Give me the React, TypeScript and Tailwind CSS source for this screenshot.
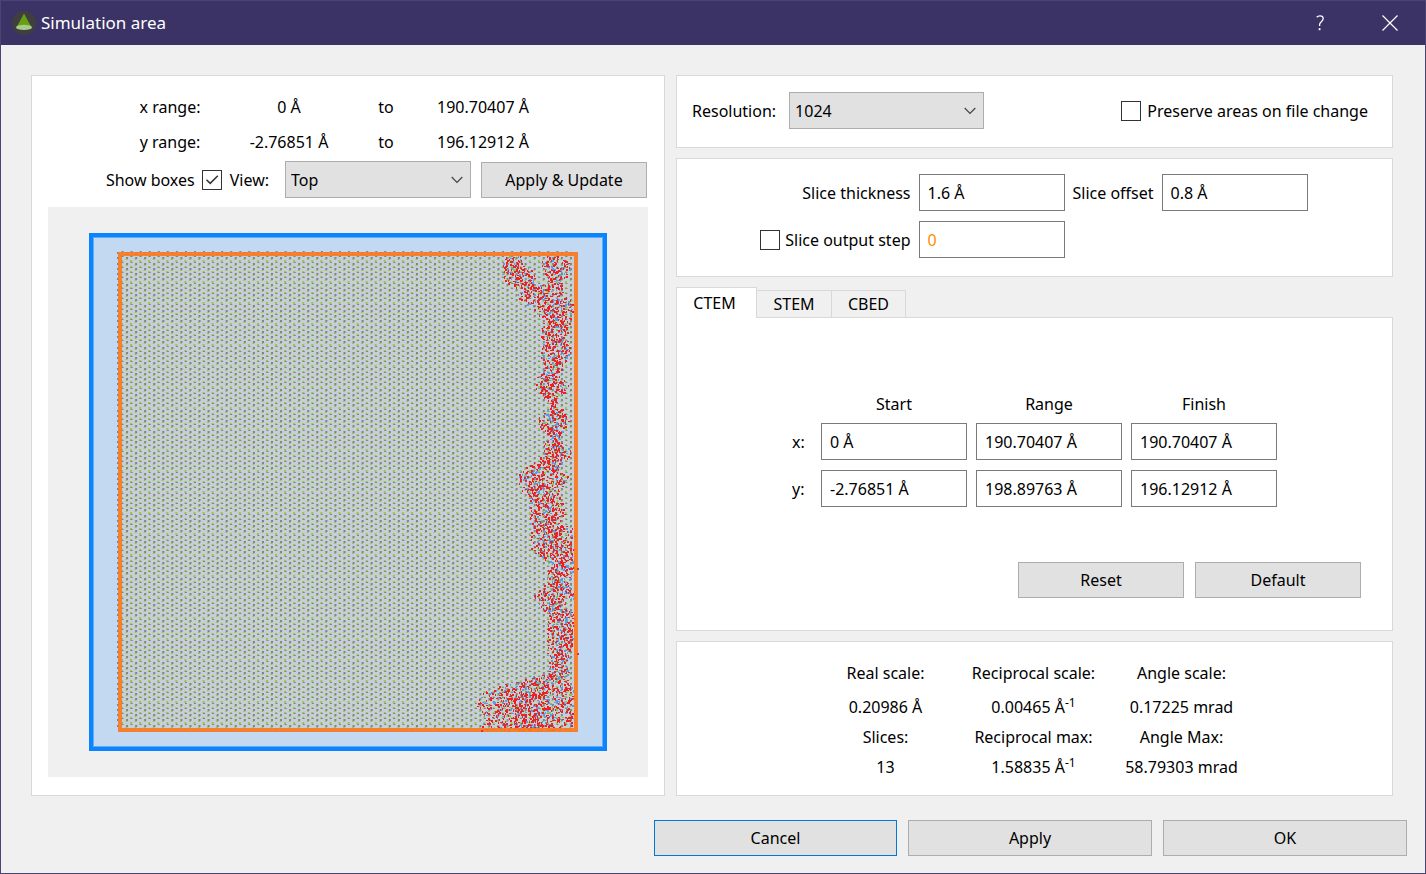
import React, { useId, useState } from "react";

const BUTTON =
  "h-9 border border-[#adadad] bg-[#e1e1e1] text-center hover:border-[#0078d7] focus:outline-none";
const FIELD =
  "h-[37px] w-full min-w-0 border border-[#7a7a7a] bg-white px-2 focus:border-[#0078d7] focus:outline-none";
const PANEL = "border border-[#d9d9d9] bg-white";

/* Horizontal extents of the amorphous region: [y, left, right] */
const CLUSTER: [number, number, number][] = [
  [49, 459, 472], [55, 455, 474], [61, 453, 482], [68, 454, 486], [75, 456, 488],
  [81, 467, 514], [87, 469, 514], [93, 471, 524], [99, 480, 526], [105, 487, 524],
  [113, 493, 522], [121, 492, 522], [129, 491, 517], [137, 494, 520], [145, 492, 524],
  [153, 493, 518], [161, 497, 514], [169, 489, 512], [177, 486, 520], [185, 488, 517],
  [191, 498, 508], [197, 501, 508], [203, 496, 515], [211, 490, 522], [219, 491, 520],
  [227, 498, 512], [235, 498, 512], [243, 492, 524], [251, 491, 521], [257, 482, 514],
  [263, 474, 513], [269, 469, 520], [277, 471, 516], [283, 472, 512], [289, 482, 512],
  [297, 480, 515], [305, 483, 518], [313, 481, 514], [321, 482, 526], [329, 483, 527],
  [337, 481, 526], [345, 483, 526], [353, 497, 528], [361, 499, 526], [369, 498, 524],
  [376, 498, 525], [383, 489, 524], [389, 485, 528], [399, 489, 514], [405, 499, 525],
  [413, 500, 526], [433, 498, 524], [448, 499, 522], [458, 501, 517], [465, 500, 524],
  [471, 477, 516], [477, 454, 524], [483, 436, 526], [493, 430, 526], [501, 428, 528],
  [509, 436, 527], [517, 434, 528], [524, 432, 526],
];
const BRANCH: [number, number, number][] = [
  [49, 498, 511], [55, 492, 520], [61, 494, 522], [68, 497, 519], [75, 499, 517], [81, 500, 514],
];

function makeRandom(seed: number) {
  let s = seed;
  return () => {
    s = (s * 1664525 + 1013904223) % 4294967296;
    return s / 4294967296;
  };
}

/* Rows of atoms zigzagging by a pixel, repeated down the cell */
function latticePath(startX: number, startY: number) {
  let d = "";
  for (let row = 0; row < 91; row++) {
    const y = Math.round(startY + row * 5.25);
    for (let col = 0; startX + col * 4.53 < 526; col++) {
      const x = startX + col * 4.53;
      const zig = col % 2;
      d += zig
        ? `M${x.toFixed(2)} ${y - 1}h2v1h-2z`
        : `M${x.toFixed(2)} ${y}h2v2h-2z`;
    }
  }
  return d;
}

function clusterPaths() {
  const rand = makeRandom(41);
  const out = { red: "", blue: "", green: "" };
  for (const spans of [CLUSTER, BRANCH]) {
    for (let i = 0; i < spans.length - 1; i++) {
      const [y0, l0, r0] = spans[i];
      const [y1, l1, r1] = spans[i + 1];
      for (let y = y0; y < y1; y++) {
        const t = (y - y0) / (y1 - y0);
        const left = l0 + (l1 - l0) * t;
        const width = r0 + (r1 - r0) * t - left;
        const count = width / 5;
        for (let n = 0; n < count; n++) {
          const u = rand() < 0.7 ? rand() : (rand() + rand()) / 2;
          const x = Math.round(left + width * u);
          const w = rand() < 0.6 ? 2 : 1;
          const h = w === 1 || rand() < 0.5 ? 2 : 1;
          const pick = rand();
          const key = pick < 0.68 ? "red" : pick < 0.93 ? "blue" : "green";
          out[key] += `M${x} ${y}h${w}v${h}h${-w}z`;
        }
      }
    }
  }
  return out;
}

const GREY_ATOMS = latticePath(69, 45);
const GREEN_ATOMS = latticePath(73, 48);
const ATOMS = clusterPaths();

function StructureView() {
  return (
    <svg
      viewBox="0 0 600 570"
      className="mt-[9px] block h-auto w-full bg-[#f0f0f0]"
      role="img"
      aria-label="Structure preview"
    >
      <rect x="41" y="26" width="518" height="518" fill="#0a84ff" />
      <rect x="45" y="30" width="510" height="510" fill="#62adf8" />
      <rect x="46" y="31" width="508" height="508" fill="#c3d9f1" />
      <rect x="70" y="45" width="460" height="480" fill="#c8ced8" />
      <path d={GREEN_ATOMS} fill="#8bcf45" />
      <path d={GREY_ATOMS} fill="#87818c" />
      <g shapeRendering="crispEdges">
        <path d={ATOMS.green} fill="#86c552" />
        <path d={ATOMS.blue} fill="#5b9ce6" />
        <path d={ATOMS.red} fill="#ee2024" />
      </g>
      <rect x="72" y="47" width="456" height="476" fill="none" stroke="#f87a22" strokeOpacity="0.93" strokeWidth="4" />
      <path d="M529 361h2v2h-2zM529 446h2v2h-2zM433 523h2v2h-2z" fill="#e03030" />
    </svg>
  );
}

function CheckBox({ id, initial = false }: { id: string; initial?: boolean }) {
  const [on, setOn] = useState(initial);
  return (
    <span className="relative inline-flex size-5 shrink-0">
      <input
        id={id}
        type="checkbox"
        checked={on}
        onChange={(e) => setOn(e.target.checked)}
        className="size-5 appearance-none border border-[#333] bg-white"
      />
      {on && (
        <svg viewBox="0 0 20 20" className="pointer-events-none absolute inset-0 size-5" fill="none" stroke="#333" strokeWidth="1.5">
          <path d="M4.5 9.8 8.2 13.4 15.8 5.8" />
        </svg>
      )}
    </span>
  );
}

function Select({ id, options, className }: { id: string; options: string[]; className: string }) {
  return (
    <span className={`relative inline-flex ${className}`}>
      <select id={id} className="h-[37px] w-full appearance-none border border-[#adadad] bg-[#e1e1e1] pr-8 pl-[5px] focus:outline-none">
        {options.map((o) => (
          <option key={o}>{o}</option>
        ))}
      </select>
      <svg viewBox="0 0 12 8" className="pointer-events-none absolute top-[15px] right-2 h-2 w-3" fill="none" stroke="#444" strokeWidth="1.2">
        <path d="M.7 1 6 6.3 11.3 1" />
      </svg>
    </span>
  );
}

function TitleBar() {
  return (
    <header className="flex h-11 items-center bg-[#3b3366] text-white">
      <svg viewBox="0 0 24 24" className="mb-px ml-[11px] size-6">
        <circle cx="12" cy="12" r="12" fill="#403f40" />
        <path d="M12 2.6 19.6 16.4H4.4z" fill="#689e13" />
        <ellipse cx="12" cy="16.4" rx="8" ry="2.7" fill="#a6cb8a" />
      </svg>
      <h1 className="ml-[5px] grow text-[17px]">Simulation area</h1>
      <button type="button" aria-label="Help" className="flex h-11 w-[70px] items-center justify-center">
        <svg viewBox="0 0 10 16" className="h-4 w-2.5" fill="none" stroke="white" strokeWidth="1.3">
          <path d="M1.7 2.2C2.6 1.2 3.7.8 5 .8c2 0 3.2 1.1 3.2 2.8 0 2.9-3.6 3.3-3.6 6v1.3" />
          <path d="M4.6 13.2v2" strokeWidth="1.8" />
        </svg>
      </button>
      <button type="button" aria-label="Close" className="flex h-11 w-[70px] items-center justify-center">
        <svg viewBox="0 0 16 16" className="size-4" fill="none" stroke="white" strokeWidth="1.2">
          <path d="M.5.5l15 15M15.5.5l-15 15" />
        </svg>
      </button>
    </header>
  );
}

function RangeRow({ label, from, to }: { label: string; from: string; to: string }) {
  return (
    <div className="grid h-[35px] grid-cols-[120px_118px_76px_118px] items-center pl-[62px] text-center">
      <span>{label}</span>
      <span>{from}</span>
      <span>to</span>
      <span>{to}</span>
    </div>
  );
}

function PreviewPanel() {
  const id = useId();
  return (
    <section className={`${PANEL} px-4 pt-[13px] pb-[18px]`}>
      <RangeRow label="x range:" from="0 Å" to="190.70407 Å" />
      <RangeRow label="y range:" from="-2.76851 Å" to="196.12912 Å" />
      <div className="mt-0.5 flex items-center justify-end">
        <label htmlFor={`${id}-boxes`} className="mr-[7px]">Show boxes</label>
        <CheckBox id={`${id}-boxes`} initial />
        <label htmlFor={`${id}-view`} className="mr-4 ml-2">View:</label>
        <Select id={`${id}-view`} options={["Top", "Front", "Left"]} className="w-[186px]" />
        <button type="button" className={`${BUTTON} mr-px ml-2.5 w-[166px]`}>Apply &amp; Update</button>
      </div>
      <StructureView />
    </section>
  );
}

function ResolutionPanel() {
  const id = useId();
  return (
    <section className={`${PANEL} flex items-center pt-4 pr-6 pb-[18px] pl-[15px]`}>
      <label htmlFor={`${id}-res`} className="mr-[13px]">Resolution:</label>
      <Select id={`${id}-res`} options={["1024", "256", "512", "2048", "4096"]} className="w-[195px]" />
      <span className="ml-auto flex items-center gap-1.5">
        <CheckBox id={`${id}-keep`} />
        <label htmlFor={`${id}-keep`}>Preserve areas on file change</label>
      </span>
    </section>
  );
}

function SlicePanel() {
  const id = useId();
  return (
    <section className={`${PANEL} grid grid-cols-[151px_146px_81px_146px] items-center justify-center gap-x-2 gap-y-2.5 pt-[15px] pr-0.5 pb-[18px]`}>
      <label htmlFor={`${id}-th`} className="text-right">Slice thickness</label>
      <input id={`${id}-th`} defaultValue="1.6 Å" className={FIELD} />
      <label htmlFor={`${id}-off`} className="text-center whitespace-nowrap">Slice offset</label>
      <input id={`${id}-off`} defaultValue="0.8 Å" className={FIELD} />
      <span className="flex items-center justify-between">
        <CheckBox id={`${id}-out`} />
        <label htmlFor={`${id}-out`}>Slice output step</label>
      </span>
      <input aria-label="Slice output step" defaultValue="0" className={`${FIELD} text-[#ff8c00]`} />
    </section>
  );
}

const AXES = [
  { axis: "x:", values: ["0 Å", "190.70407 Å", "190.70407 Å"] },
  { axis: "y:", values: ["-2.76851 Å", "198.89763 Å", "196.12912 Å"] },
];
const COLUMNS = ["Start", "Range", "Finish"];

function ModeTabs() {
  const [active, setActive] = useState("CTEM");
  return (
    <section className="flex grow flex-col">
      <div role="tablist" className="flex items-end">
        {[
          { name: "CTEM", width: "w-[81px]" },
          { name: "STEM", width: "w-[75px]" },
          { name: "CBED", width: "w-[74px]" },
        ].map(({ name, width }) => (
          <button
            key={name}
            type="button"
            role="tab"
            aria-selected={active === name}
            onClick={() => setActive(name)}
            className={
              active === name
                ? `${width} relative -mb-px h-[31px] border border-b-0 border-[#d9d9d9] bg-white pr-1`
                : `${width} -mb-px h-[28px] border border-l-0 border-[#d9d9d9] bg-[#f0f0f0]`
            }
          >
            {name}
          </button>
        ))}
      </div>
      <div role="tabpanel" className={`${PANEL} flex grow flex-col pt-[74px] pr-[31px] pb-8`}>
        <div className="grid grid-cols-[20px_146px_146px_146px] justify-center gap-x-[9px] gap-y-2.5 pl-[31px]">
          <span className="col-start-2 -mb-[3px] h-6 text-center">Start</span>
          <span className="-mb-[3px] h-6 text-center">Range</span>
          <span className="-mb-[3px] h-6 text-center">Finish</span>
          {AXES.map(({ axis, values }) => (
            <React.Fragment key={axis}>
              <span className="self-center">{axis}</span>
              {values.map((v, i) => (
                <input key={COLUMNS[i]} aria-label={`${axis} ${COLUMNS[i]}`} defaultValue={v} className={FIELD} />
              ))}
            </React.Fragment>
          ))}
        </div>
        <div className="mt-auto flex justify-end gap-[11px]">
          <button type="button" className={`${BUTTON} w-[166px]`}>Reset</button>
          <button type="button" className={`${BUTTON} w-[166px]`}>Default</button>
        </div>
      </div>
    </section>
  );
}

function Inverse({ value }: { value: string }) {
  return (
    <span>
      {value} Å<sup className="text-xs">-1</sup>
    </span>
  );
}

function ScalePanel() {
  return (
    <section className={`${PANEL} pt-4 pb-[13px] text-center leading-[30px]`}>
      <div className="grid grid-cols-[148px_148px_148px] justify-center pr-0.5">
        <span className="mb-1">Real scale:</span>
        <span className="mb-1">Reciprocal scale:</span>
        <span className="mb-1">Angle scale:</span>
        <span>0.20986 Å</span>
        <Inverse value="0.00465" />
        <span>0.17225 mrad</span>
        <span>Slices:</span>
        <span>Reciprocal max:</span>
        <span>Angle Max:</span>
        <span>13</span>
        <Inverse value="1.58835" />
        <span>58.79303 mrad</span>
      </div>
    </section>
  );
}

export default function App() {
  return (
    <div className="flex min-h-screen flex-col border border-[#4a4374] bg-[#f0f0f0] font-['Noto_Sans','Open_Sans',sans-serif] text-base text-black">
      <TitleBar />
      <main className="grid grow grid-cols-[634fr_717fr] gap-[11px] pt-[30px] pr-8 pl-[30px]">
        <PreviewPanel />
        <div className="flex flex-col gap-2.5">
          <ResolutionPanel />
          <SlicePanel />
          <ModeTabs />
          <ScalePanel />
        </div>
      </main>
      <footer className="flex justify-end gap-[11px] pt-6 pr-[18px] pb-[17px]">
        <button type="button" className="h-9 w-[243px] border border-[#0078d7] bg-[#e1e1e1]">Cancel</button>
        <button type="button" className={`${BUTTON} w-[244px]`}>Apply</button>
        <button type="button" className={`${BUTTON} w-[244px]`}>OK</button>
      </footer>
    </div>
  );
}
